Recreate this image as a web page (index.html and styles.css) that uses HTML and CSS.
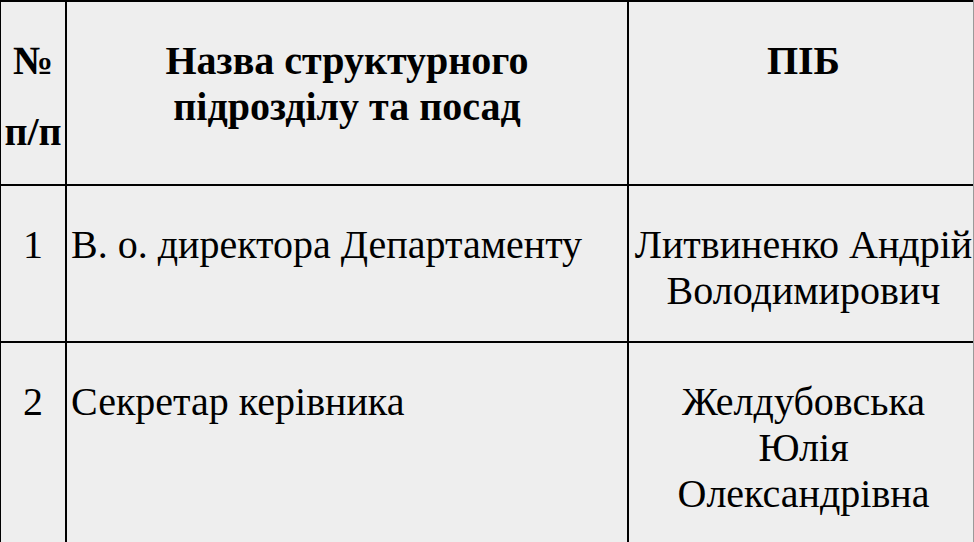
FILE: index.html
```html
<!DOCTYPE html>
<html lang="uk">
<head>
<meta charset="utf-8">
<title>Структура</title>
<link rel="stylesheet" href="styles.css">
</head>
<body>
<div class="frame">
  <table class="staff">
    <colgroup>
      <col class="c-num">
      <col class="c-name">
      <col class="c-pib">
    </colgroup>
    <thead>
      <tr>
        <th class="num"><div class="num-top">№</div><div>п/п</div></th>
        <th>Назва структурного підрозділу та посад</th>
        <th>ПІБ</th>
      </tr>
    </thead>
    <tbody>
      <tr>
        <td class="num">1</td>
        <td class="pos">В. о. директора Департаменту</td>
        <td class="pib">Литвиненко Андрій Володимирович</td>
      </tr>
      <tr>
        <td class="num">2</td>
        <td class="pos">Секретар керівника</td>
        <td class="pib">Желдубовська Юлія Олександрівна</td>
      </tr>
    </tbody>
  </table>
</div>
</body>
</html>
```

FILE: styles.css
```css
html, body {
  margin: 0;
  padding: 0;
  background: #eeeeee;
}

.frame {
  width: 973px;
  height: 542px;
  overflow: hidden;
  border-right: 1px solid #9a9a9a;
  background: #eeeeee;
}

.staff {
  border-collapse: separate;
  border-spacing: 0;
  table-layout: fixed;
  width: 981px;
  margin-left: -1px;
  border-top: 2px solid #000;
  border-left: 2px solid #000;
  font-family: "Liberation Serif", "Times New Roman", serif;
  font-size: 40px;
  line-height: 46px;
  color: #000;
}

.c-num { width: 66px; }
.c-name { width: 562px; }
.c-pib { width: 351px; }

.staff th,
.staff td {
  border-right: 2px solid #000;
  border-bottom: 2px solid #000;
  padding: 36px 4px 27px;
  vertical-align: top;
  text-align: center;
}

.staff th {
  font-weight: bold;
  padding-bottom: 29px;
}

.staff th.num,
.staff td.num {
  padding-left: 0;
  padding-right: 0;
}

.num-top {
  margin-bottom: 25px;
}

.staff td.pos {
  text-align: left;
}
```
